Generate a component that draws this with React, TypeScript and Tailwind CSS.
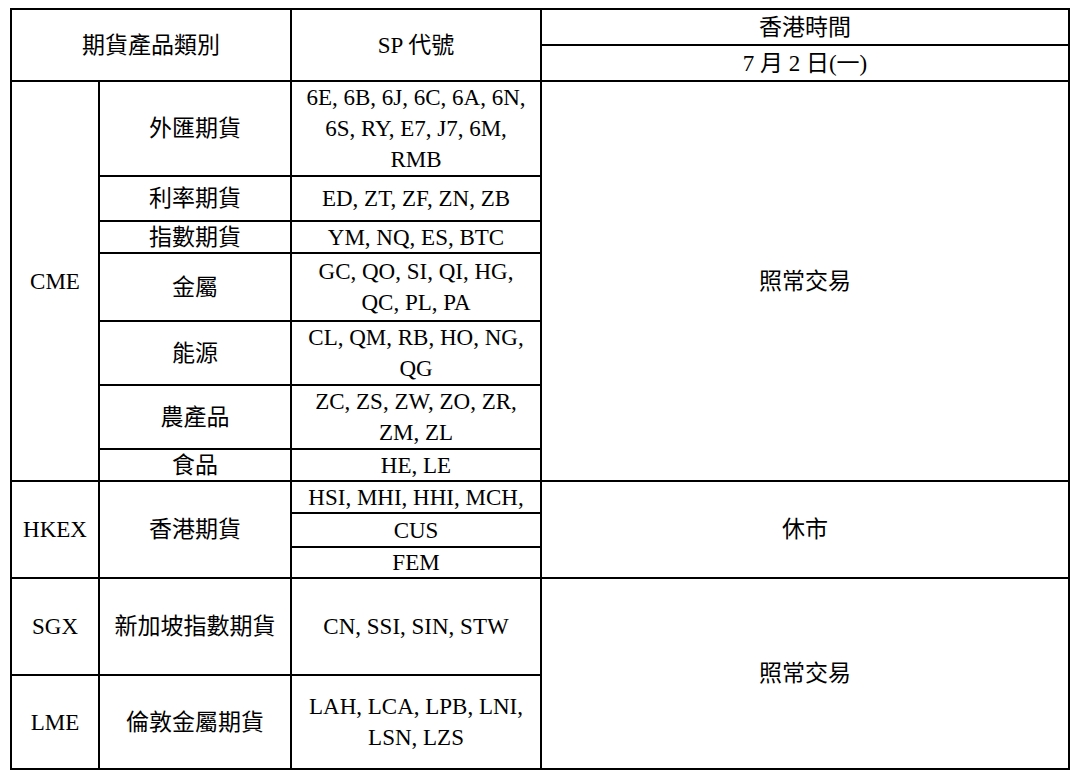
import React from 'react';

// 一格:置中,白底(黑底 + 2px 間隙做出格線)
const Cell = ({ className = '', children }: { className?: string; children: React.ReactNode }) => (
  <div className={`bg-white flex items-center justify-center text-center ${className}`}>
    <div>{children}</div>
  </div>
);

const Lines = ({ lines }: { lines: string[] }) => (
  <>
    {lines.map((l, i) => (
      <div key={i} className="whitespace-nowrap">{l}</div>
    ))}
  </>
);

export default function App() {
  return (
    <div className="w-[1080px] h-[780px] bg-white pt-[8px] pl-[10px]">
      <div
        className="grid w-[1060px] bg-black p-[2px] gap-[2px] text-[23px] leading-[31px] text-black grid-cols-[86px_190px_248px_526px] grid-rows-[34px_34px_93px_43px_30px_66px_62px_62px_30px_30px_32px_29px_95px_92px]"
        style={{ fontFamily: '"Liberation Serif", "Noto Sans CJK TC", serif' }}
      >
        {/* 表頭 */}
        <Cell className="col-start-1 col-span-2 row-start-1 row-span-2">期貨產品類別</Cell>
        <Cell className="col-start-3 row-start-1 row-span-2">SP 代號</Cell>
        <Cell className="col-start-4 row-start-1">香港時間</Cell>
        <Cell className="col-start-4 row-start-2">7 月 2 日(一)</Cell>

        {/* CME */}
        <Cell className="col-start-1 row-start-3 row-span-7">CME</Cell>
        <Cell className="col-start-2 row-start-3">外匯期貨</Cell>
        <Cell className="col-start-3 row-start-3">
          <Lines lines={['6E, 6B, 6J, 6C, 6A, 6N,', '6S, RY, E7, J7, 6M,', 'RMB']} />
        </Cell>
        <Cell className="col-start-2 row-start-4">利率期貨</Cell>
        <Cell className="col-start-3 row-start-4">ED, ZT, ZF, ZN, ZB</Cell>
        <Cell className="col-start-2 row-start-5">指數期貨</Cell>
        <Cell className="col-start-3 row-start-5">YM, NQ, ES, BTC</Cell>
        <Cell className="col-start-2 row-start-6">金屬</Cell>
        <Cell className="col-start-3 row-start-6">
          <Lines lines={['GC, QO, SI, QI, HG,', 'QC, PL, PA']} />
        </Cell>
        <Cell className="col-start-2 row-start-7">能源</Cell>
        <Cell className="col-start-3 row-start-7">
          <Lines lines={['CL, QM, RB, HO, NG,', 'QG']} />
        </Cell>
        <Cell className="col-start-2 row-start-8">農產品</Cell>
        <Cell className="col-start-3 row-start-8">
          <Lines lines={['ZC, ZS, ZW, ZO, ZR,', 'ZM, ZL']} />
        </Cell>
        <Cell className="col-start-2 row-start-9">食品</Cell>
        <Cell className="col-start-3 row-start-9">HE, LE</Cell>
        <Cell className="col-start-4 row-start-3 row-span-7">照常交易</Cell>

        {/* HKEX */}
        <Cell className="col-start-1 row-start-10 row-span-3">HKEX</Cell>
        <Cell className="col-start-2 row-start-10 row-span-3">香港期貨</Cell>
        <Cell className="col-start-3 row-start-10">HSI, MHI, HHI, MCH,</Cell>
        <Cell className="col-start-3 row-start-11">CUS</Cell>
        <Cell className="col-start-3 row-start-12">FEM</Cell>
        <Cell className="col-start-4 row-start-10 row-span-3">休市</Cell>

        {/* SGX / LME */}
        <Cell className="col-start-1 row-start-13">SGX</Cell>
        <Cell className="col-start-2 row-start-13">新加坡指數期貨</Cell>
        <Cell className="col-start-3 row-start-13">CN, SSI, SIN, STW</Cell>
        <Cell className="col-start-1 row-start-14">LME</Cell>
        <Cell className="col-start-2 row-start-14">倫敦金屬期貨</Cell>
        <Cell className="col-start-3 row-start-14">
          <Lines lines={['LAH, LCA, LPB, LNI,', 'LSN, LZS']} />
        </Cell>
        <Cell className="col-start-4 row-start-13 row-span-2">照常交易</Cell>
      </div>
    </div>
  );
}
